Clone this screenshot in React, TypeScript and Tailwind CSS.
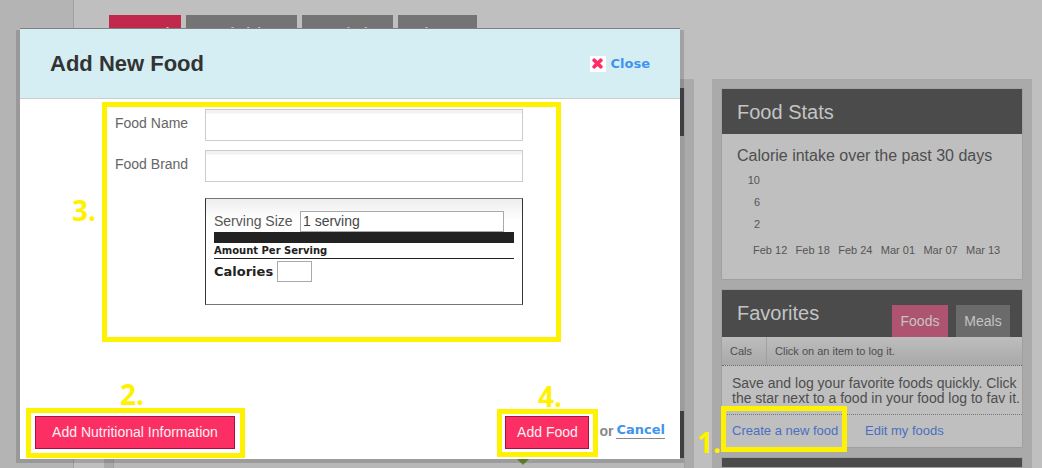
const tabs = [
  { label: "Food", width: "w-[72px]", bg: "bg-[#c0284c]" },
  { label: "Activities", width: "w-[111px]", bg: "bg-[#747474]" },
  { label: "Weight", width: "w-[91px]", bg: "bg-[#747474]" },
  { label: "Sleep", width: "w-[79px]", bg: "bg-[#747474]" },
];

const dates = ["Feb 12", "Feb 18", "Feb 24", "Mar 01", "Mar 07", "Mar 13"];

const Highlight = ({ className }: { className: string }) => (
  <div className={`pointer-events-none absolute border-[5px] border-[#fff200] ${className}`} />
);

const StepNumber = ({ className, children }: { className: string; children: string }) => (
  <div className={`absolute font-['Open_Sans',sans-serif] text-[28px] font-bold leading-none text-[#fff200] ${className}`}>
    {children}
  </div>
);

const FoodStats = () => (
  <section className="h-[192px] border border-[#a0a0a0] bg-[#bfbfbf]">
    <h2 className="flex h-[45px] items-center bg-[#4b4b4b] pl-[15px] text-[20px] text-[#c4c4c4]">Food Stats</h2>
    <p className="pt-3 pl-[15px] text-[16px] leading-[20px] text-[#4e4e4e]">Calorie intake over the past 30 days</p>
    <div className="mt-[3px] w-[38px] text-right text-[11px] leading-[22px] text-[#555555]">
      <div>10</div>
      <div>6</div>
      <div>2</div>
    </div>
    <div className="mt-[4px] flex pl-[31px] text-[11px] leading-[22px] text-[#555555]">
      {dates.map((date) => (
        <span key={date} className="w-[42.6px] shrink-0">{date}</span>
      ))}
    </div>
  </section>
);

const Favorites = () => (
  <section className="h-[159px] border border-[#a0a0a0] bg-[#bfbfbf]">
    <div className="flex h-[47px] justify-between bg-[#4b4b4b] pr-[12px] pl-[15px]">
      <h2 className="pt-[8px] text-[20px] leading-[30px] text-[#c4c4c4]">Favorites</h2>
      <div className="flex items-end gap-[8px] text-[14px] text-[#c4c4c4]">
        <span className="flex h-[32px] w-[56px] items-center justify-center bg-[#af5470]">Foods</span>
        <span className="flex h-[32px] w-[54px] items-center justify-center bg-[#6b6b6b]">Meals</span>
      </div>
    </div>
    <div className="flex h-[29px] border-b border-dotted border-[#666666] bg-linear-to-b from-[#bdbdbd] to-[#a9a9a9] text-[11px] text-[#4e4e4e]">
      <span className="flex w-[45px] items-center border-r border-[#a0a0a0] pl-2">Cals</span>
      <span className="flex items-center pl-2">Click on an item to log it.</span>
    </div>
    <p className="h-[49px] border-b border-dotted border-[#777777] pt-[10px] pl-[10px] text-[14px] leading-[15px] text-[#4e4e4e]">
      Save and log your favorite foods quickly. Click
      <br />
      the star next to a food in your food log to fav it.
    </p>
    <div className="flex pt-[7px] pl-[10px] text-[13px] leading-[18px] text-[#4a6fc0]">
      <a className="w-[133px]">Create a new food</a>
      <a>Edit my foods</a>
    </div>
  </section>
);

const NutritionLabel = () => (
  <div className="mt-4 ml-[185px] h-[107px] w-[318px] border-x border-y border-x-[#333333] border-y-[#777777] border-y-dotted bg-linear-to-b from-[#eeeeee] to-white to-20% px-2 pt-[11px] text-[#222222]">
    <div className="flex h-[22px] items-center">
      <label className="w-[86px] text-[14px] text-[#555555]">Serving Size</label>
      <input
        readOnly
        defaultValue="1 serving"
        className="h-[21px] w-[204px] border border-[#aaaaaa] bg-white pl-[2px] text-[14px] text-[#444444] outline-none"
      />
    </div>
    <div className="h-[11px] w-[300px] bg-[#222222]" />
    <div className="w-[300px] border-b border-[#222222] pt-[1px] pb-[1px] font-['DejaVu_Sans',sans-serif] text-[10px] leading-[13px] font-bold">
      Amount Per Serving
    </div>
    <div className="mt-[2px] flex items-center gap-[4px] font-['DejaVu_Sans',sans-serif] text-[13px] font-bold">
      Calories
      <input readOnly className="h-[21px] w-[35px] border border-[#aaaaaa] bg-white outline-none" />
    </div>
  </div>
);

const PinkButton = ({ className, children }: { className: string; children: string }) => (
  <button className={`flex h-[33px] items-center justify-center border border-[#a51243] bg-[#fb2f63] text-[14px] text-[#fdf0f4] ${className}`}>
    {children}
  </button>
);

const AddFoodModal = () => (
  <>
    <div className="absolute top-[30px] left-[16px] h-[433px] w-[668px] bg-black/15" />
    <div className="absolute top-[28px] left-[20px] flex h-[431px] w-[660px] flex-col border-t border-[#808080] bg-white">
      <header className="flex h-[70px] shrink-0 items-center justify-between border-b border-[#cccccc] bg-[#d5eef4] pr-[30px] pl-[30px]">
        <h1 className="text-[22px] font-bold text-[#333333]">Add New Food</h1>
        <div className="flex items-center gap-[5px]">
          <span className="flex size-4 items-center justify-center bg-white">
            <svg viewBox="0 0 10 10" className="size-[11px]" fill="none" stroke="#ff2d62" strokeWidth="3.4" strokeLinecap="round">
              <path d="M2 2l6 6M8 2l-6 6" />
            </svg>
          </span>
          <a className="font-['DejaVu_Sans',sans-serif] text-[13px] font-bold text-[#3f94ee]">Close</a>
        </div>
      </header>

      <div className="pt-[10px] pl-[95px] text-[14px] text-[#666666]">
        <div className="flex">
          <label className="w-[90px] pt-[5px] leading-[18px]">Food Name</label>
          <input readOnly className="h-[32px] w-[318px] border border-[#cccccc] bg-linear-to-b from-[#f2f2f2] from-[3px] to-white to-[4px] outline-none" />
        </div>
        <div className="mt-[9px] flex">
          <label className="w-[90px] pt-[5px] leading-[18px]">Food Brand</label>
          <input readOnly className="h-[32px] w-[318px] border border-[#cccccc] bg-linear-to-b from-[#f2f2f2] from-[3px] to-white to-[4px] outline-none" />
        </div>
      </div>
      <div className="-ml-[95px]">
        <div className="ml-[95px]">
          <NutritionLabel />
        </div>
      </div>

      <footer className="mt-auto flex items-start justify-between pr-[15px] pb-[10px] pl-[15px]">
        <PinkButton className="w-[200px]">Add Nutritional Information</PinkButton>
        <div className="flex items-start">
          <PinkButton className="w-[84px]">Add Food</PinkButton>
          <span className="mt-[5px] ml-[10px] text-[14px] font-bold text-[#888888]">or</span>
          <a className="mt-[6px] ml-[3px] h-[17px] border-b border-[#888888] font-['DejaVu_Sans',sans-serif] text-[13px] leading-[15px] font-bold text-[#3f94ee]">Cancel</a>
        </div>
      </footer>
    </div>
  </>
);

export default function App() {
  return (
    <div className="relative flex h-[468px] w-[1042px] overflow-hidden bg-[#bfbfbf] font-['Liberation_Sans',sans-serif]">
      <div className="w-[74px] shrink-0 border-r border-[#a0a0a0] bg-[#b4b4b4]" />

      <main className="flex-1">
        <nav className="flex h-[79px] gap-[5px] pt-[15px] pl-[35px]">
          {tabs.map((tab) => (
            <span key={tab.label} className={`h-[40px] pt-[4px] text-center text-[22px] text-[#c4c4c4] ${tab.width} ${tab.bg}`}>
              {tab.label}
            </span>
          ))}
        </nav>

        <div className="ml-[30px] flex gap-[18px]">
          <div className="h-[389px] w-[590px] bg-[#a9aaa9] px-[9px] pt-[9px]">
            <div className="h-[380px] border-x border-[#a0a0a0] bg-[#b8b8b8]">
              <div className="h-[48px] bg-[#4b4b4b]" />
              <div className="h-[275px]" />
              <div className="relative h-[47px] bg-[#4b4b4b]">
                <span className="absolute top-full left-[402px] size-0 border-x-[7px] border-t-[7px] border-x-transparent border-t-[#6d8c2c]" />
              </div>
            </div>
          </div>

          <aside className="flex h-[389px] w-[320px] flex-col gap-[9px] bg-[#a9aaa9] px-[9px] pt-[9px]">
            <FoodStats />
            <Favorites />
            <div className="flex-1 border border-[#a0a0a0] bg-[#4b4b4b]" />
          </aside>
        </div>
      </main>

      <AddFoodModal />

      <Highlight className="top-[102px] left-[102px] h-[240px] w-[459px]" />
      <Highlight className="top-[408px] left-[26px] h-[50px] w-[219px]" />
      <Highlight className="top-[409px] left-[497px] h-[48px] w-[101px]" />
      <Highlight className="top-[406px] left-[721px] h-[46px] w-[126px]" />

      <StepNumber className="top-[428px] left-[697px]">1.</StepNumber>
      <StepNumber className="top-[380px] left-[120px]">2.</StepNumber>
      <StepNumber className="top-[196px] left-[72px]">3.</StepNumber>
      <StepNumber className="top-[382px] left-[538px]">4.</StepNumber>
    </div>
  );
}
